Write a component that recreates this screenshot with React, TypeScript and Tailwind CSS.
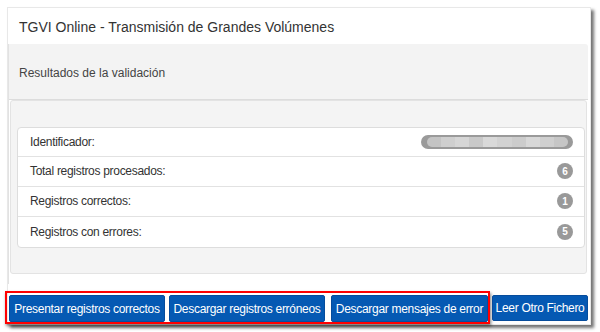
const rows = [
  { label: 'Total registros procesados:', value: '6' },
  { label: 'Registros correctos:', value: '1' },
  { label: 'Registros con errores:', value: '5' },
]

// blurred identifier blocks
const blurBlocks = ['#c4c4c4', '#cfcfcf', '#d6d6d6', '#c9c9c9', '#d9d9d9', '#d2d2d2', '#cccccc', '#d8d8d8', '#cfcfcf', '#c6c6c6']

const btn =
  'h-[27px] px-0 whitespace-nowrap bg-[#0559b3] border border-[#064c9c] rounded-[2px] text-white text-[12px] tracking-[-0.3px] flex items-center justify-center'

export default function App() {
  return (
    <div className="w-[600px] h-[332px] bg-white pt-[7px] pl-[7px] overflow-hidden font-['Liberation_Sans',Arial,sans-serif] text-[#333]">
      <div className="w-[584px] h-[318px] bg-white border border-[#e8e8e8] shadow-[3px_3px_3px_rgba(0,0,0,0.55)] flex flex-col">
        {/* Title */}
        <div className="h-[36px] flex items-center pt-[3px] pl-[11px] text-[14px] text-[#333]">
          TGVI Online - Transmisión de Grandes Volúmenes
        </div>

        {/* Panel */}
        <div className="mr-[2px] border-l border-[#e2e2e2] h-[241px] flex flex-col">
          <div className="h-[56px] bg-[#f3f3f3] border-b border-[#dcdcdc] rounded-tr-[3px] flex items-center pt-[3px] pl-[10px] text-[12px] text-[#444]">
            Resultados de la validación
          </div>
          <div className="px-[1px] pb-[10px]">
            <div className="h-[174px] bg-[#f4f4f4] border border-[#e3e3e3] rounded-[3px] pt-[26px] pl-[6px] pr-[1px]">
              <div className="bg-white border border-[#dddddd] rounded-[4px] text-[12px] tracking-[-0.3px] text-[#333]">
                <div className="h-[29px] flex items-center justify-between pl-[12px] pr-[11px] border-b border-[#e2e2e2]">
                  <span>Identificador:</span>
                  <div className="w-[152px] h-[14px] rounded-full bg-[#9a9a9a] p-[2px] flex">
                    <div className="flex flex-1 rounded-full overflow-hidden ml-[4px] mr-[3px]">
                      {blurBlocks.map((c, i) => (
                        <div key={i} className="flex-1 h-full" style={{ backgroundColor: c }} />
                      ))}
                    </div>
                  </div>
                </div>
                {rows.map((row, i) => (
                  <div
                    key={row.label}
                    className={`h-[30px] flex items-center justify-between pl-[12px] pr-[11px] ${i < rows.length - 1 ? 'border-b border-[#e2e2e2]' : ''}`}
                  >
                    <span>{row.label}</span>
                    <span className="w-[16px] h-[16px] rounded-full bg-[#999999] text-white text-[10px] tracking-normal font-bold flex items-center justify-center">
                      {row.value}
                    </span>
                  </div>
                ))}
              </div>
            </div>
          </div>
        </div>

        {/* Actions */}
        <div className="mt-[7px] -ml-[3px] flex items-start">
          <div className="border-2 border-[#ff0000] shadow-[1px_2px_3px_rgba(0,0,0,0.5)] pl-[2px] pt-[2px] flex gap-[4px] h-[33px]">
            <button className={`${btn} w-[156px]`}>Presentar registros correctos</button>
            <button className={`${btn} w-[156px]`}>Descargar registros erróneos</button>
            <button className={`${btn} w-[157px] ml-[2px]`}>Descargar mensajes de error</button>
          </div>
          <button className={`${btn} ml-[2px] mt-[4px] w-[96px] !h-[26px]`}>Leer Otro Fichero</button>
        </div>
      </div>
    </div>
  )
}
